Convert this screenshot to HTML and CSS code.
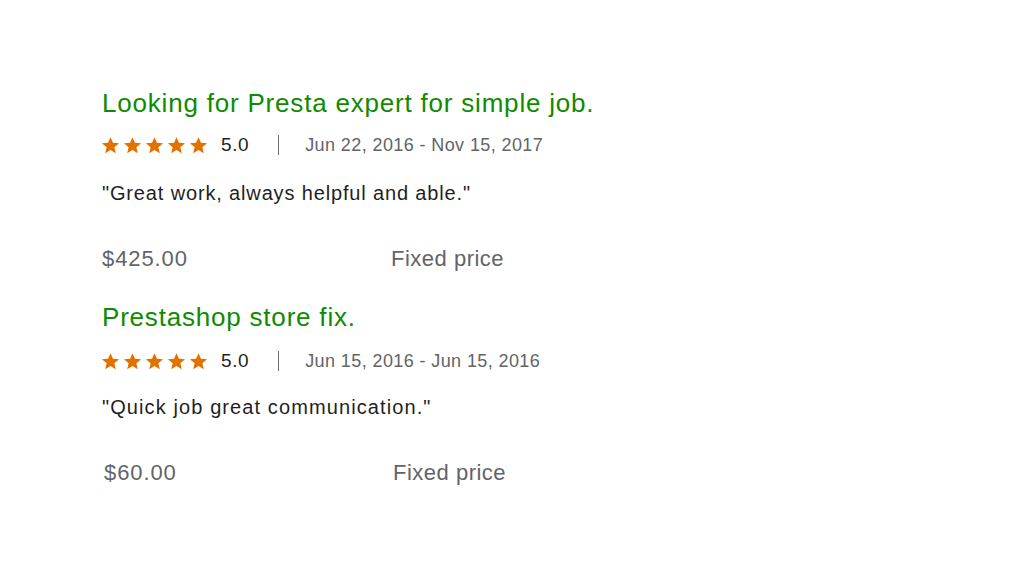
FILE: index.html
```html
<!DOCTYPE html>
<html>
<head>
<meta charset="utf-8">
<link rel="stylesheet" href="styles.css">
</head>
<body>
<div class="list">
  <section class="job">
    <h2 class="title">Looking for Presta expert for simple job.</h2>
    <div class="meta">
      <span class="stars">
        <svg viewBox="0 0 24 24"><path d="M12 1.5l3.1 7.1 7.7.6-5.9 5 1.8 7.6L12 17.7l-6.7 4.1 1.8-7.6-5.9-5 7.7-.6z"/></svg>
        <svg viewBox="0 0 24 24"><path d="M12 1.5l3.1 7.1 7.7.6-5.9 5 1.8 7.6L12 17.7l-6.7 4.1 1.8-7.6-5.9-5 7.7-.6z"/></svg>
        <svg viewBox="0 0 24 24"><path d="M12 1.5l3.1 7.1 7.7.6-5.9 5 1.8 7.6L12 17.7l-6.7 4.1 1.8-7.6-5.9-5 7.7-.6z"/></svg>
        <svg viewBox="0 0 24 24"><path d="M12 1.5l3.1 7.1 7.7.6-5.9 5 1.8 7.6L12 17.7l-6.7 4.1 1.8-7.6-5.9-5 7.7-.6z"/></svg>
        <svg viewBox="0 0 24 24"><path d="M12 1.5l3.1 7.1 7.7.6-5.9 5 1.8 7.6L12 17.7l-6.7 4.1 1.8-7.6-5.9-5 7.7-.6z"/></svg>
      </span>
      <span class="score">5.0</span>
      <span class="sep"></span>
      <span class="dates">Jun 22, 2016 - Nov 15, 2017</span>
    </div>
    <p class="quote">"Great work, always helpful and able."</p>
    <div class="price">
      <span class="amount">$425.00</span>
      <span class="kind">Fixed price</span>
    </div>
  </section>
  <section class="job second">
    <h2 class="title">Prestashop store fix.</h2>
    <div class="meta">
      <span class="stars">
        <svg viewBox="0 0 24 24"><path d="M12 1.5l3.1 7.1 7.7.6-5.9 5 1.8 7.6L12 17.7l-6.7 4.1 1.8-7.6-5.9-5 7.7-.6z"/></svg>
        <svg viewBox="0 0 24 24"><path d="M12 1.5l3.1 7.1 7.7.6-5.9 5 1.8 7.6L12 17.7l-6.7 4.1 1.8-7.6-5.9-5 7.7-.6z"/></svg>
        <svg viewBox="0 0 24 24"><path d="M12 1.5l3.1 7.1 7.7.6-5.9 5 1.8 7.6L12 17.7l-6.7 4.1 1.8-7.6-5.9-5 7.7-.6z"/></svg>
        <svg viewBox="0 0 24 24"><path d="M12 1.5l3.1 7.1 7.7.6-5.9 5 1.8 7.6L12 17.7l-6.7 4.1 1.8-7.6-5.9-5 7.7-.6z"/></svg>
        <svg viewBox="0 0 24 24"><path d="M12 1.5l3.1 7.1 7.7.6-5.9 5 1.8 7.6L12 17.7l-6.7 4.1 1.8-7.6-5.9-5 7.7-.6z"/></svg>
      </span>
      <span class="score">5.0</span>
      <span class="sep"></span>
      <span class="dates">Jun 15, 2016 - Jun 15, 2016</span>
    </div>
    <p class="quote">"Quick job great communication."</p>
    <div class="price">
      <span class="amount">$60.00</span>
      <span class="kind">Fixed price</span>
    </div>
  </section>
</div>
</body>
</html>
```
FILE: styles.css
```css
html, body {
  margin: 0;
  padding: 0;
  background: #ffffff;
}
body {
  font-family: "Liberation Sans", Arial, sans-serif;
  color: #1f1f1f;
}
.list {
  padding: 84px 0 0 102px;
  display: flex;
  flex-direction: column;
}
.job {
  display: flex;
  flex-direction: column;
}
.title {
  margin: 0;
  font-size: 26px;
  letter-spacing: 0.8px;
  font-weight: normal;
  line-height: 38px;
  color: #108a00;
}
.meta {
  display: flex;
  align-items: center;
  height: 30px;
  margin-top: 8px;
}
.stars {
  display: flex;
  gap: 4px;
  margin-left: -1px;
}
.stars svg {
  width: 19px;
  height: 19px;
  fill: #e27200;
  margin-right: -1px;
}
.score {
  margin-left: 14px;
  font-size: 19px;
  letter-spacing: 0.6px;
  color: #1f1f1f;
}
.sep {
  width: 1px;
  height: 20px;
  background: #6b6b6b;
  margin: 0 26px 0 29px;
}
.dates {
  font-size: 18px;
  letter-spacing: 0.4px;
  color: #626468;
}
.quote {
  margin: 21px 0 0;
  font-size: 20px;
  letter-spacing: 0.85px;
  line-height: 24px;
  color: #1f1f1f;
}
.price {
  display: flex;
  margin-top: 42px;
  font-size: 22px;
  letter-spacing: 0.9px;
  line-height: 24px;
  color: #626468;
}
.amount {
  width: 289px;
}
.kind {
  letter-spacing: 0.5px;
}
.second {
  margin-top: 27px;
}
.second .meta {
  margin-top: 10px;
}
.second .quote {
  margin-top: 19px;
  letter-spacing: 1.1px;
}
.second .price {
  padding-left: 2px;
  margin-top: 42px;
}
```
